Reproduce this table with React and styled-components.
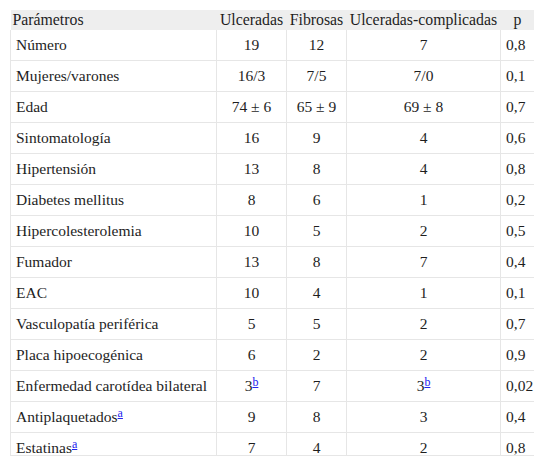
import React from 'react'
import styled, { createGlobalStyle } from 'styled-components'

const GlobalStyle = createGlobalStyle`
    body {
        margin: 0;
        background: #fff;
        font-family: "Liberation Serif", "Times New Roman", serif;
        color: #222;
    }
`

const rows = [
    ['Número', '19', '12', '7', '0,8'],
    ['Mujeres/varones', '16/3', '7/5', '7/0', '0,1'],
    ['Edad', '74 ± 6', '65 ± 9', '69 ± 8', '0,7'],
    ['Sintomatología', '16', '9', '4', '0,6'],
    ['Hipertensión', '13', '8', '4', '0,8'],
    ['Diabetes mellitus', '8', '6', '1', '0,2'],
    ['Hipercolesterolemia', '10', '5', '2', '0,5'],
    ['Fumador', '13', '8', '7', '0,4'],
    ['EAC', '10', '4', '1', '0,1'],
    ['Vasculopatía periférica', '5', '5', '2', '0,7'],
    ['Placa hipoecogénica', '6', '2', '2', '0,9'],
    ['Enfermedad carotídea bilateral', ['3', 'b'], '7', ['3', 'b'], '0,02'],
    [['Antiplaquetados', 'a'], '9', '8', '3', '0,4'],
    [['Estatinas', 'a'], '7', '4', '2', '0,8'],
]

const headers = ['Parámetros', 'Ulceradas', 'Fibrosas', 'Ulceradas-complicadas', 'p']

function Cell({ value }) {
    if (Array.isArray(value)) {
        return (
            <>
                {value[0]}
                <Note href="#">{value[1]}</Note>
            </>
        )
    }
    return value
}

function App() {
    return (
        <Page>
            <GlobalStyle />
            <Frame>
                <Table>
                    <colgroup>
                        <Col $w={206} />
                        <Col $w={70} />
                        <Col $w={60} />
                        <Col $w={154} />
                        <Col $w={34} />
                    </colgroup>
                    <thead>
                        <tr>
                            {headers.map((h, i) => (
                                <Th key={h} $align={i === 0 ? 'left' : 'center'}>{h}</Th>
                            ))}
                        </tr>
                    </thead>
                    <tbody>
                        {rows.map((r, i) => (
                            <tr key={i}>
                                {r.map((v, j) => (
                                    <Td key={j} $align={j === 0 || j === 4 ? 'left' : 'center'}>
                                        <Cell value={v} />
                                    </Td>
                                ))}
                            </tr>
                        ))}
                    </tbody>
                </Table>
            </Frame>
        </Page>
    )
}

export default App

const Page = styled.div`
    padding: 10px 10px 0 10px;
`

const Frame = styled.div`
    width: 524px;
    height: 445px;
    overflow: hidden;
    border-bottom: 1px solid #e6e6e6;
`

const Table = styled.table`
    width: 524px;
    table-layout: fixed;
    border-collapse: collapse;
    font-family: "Liberation Serif", "Times New Roman", serif;
    font-size: 15.5px;
    color: #1e1e1e;
`

const Col = styled.col`
    width: ${(p) => p.$w}px;
`

const Th = styled.th`
    background: #eeeeee;
    font-family: "Liberation Serif", "Times New Roman", serif;
    font-size: 15.8px;
    font-weight: normal;
    text-align: ${(p) => p.$align};
    padding: 1px 2px 2px 2px;
    line-height: 17px;
    white-space: nowrap;
    overflow: visible;
`

const Td = styled.td`
    border: 1px solid #e6e6e6;
    border-top: none;
    font-family: "Liberation Serif", "Times New Roman", serif;
    text-align: ${(p) => p.$align};
    padding: 6px 5px 6px 5px;
    line-height: 18px;
    white-space: nowrap;
    overflow: visible;
`

const Note = styled.a`
    color: #2222ee;
    text-decoration: underline;
    font-size: 12px;
    vertical-align: 5px;
    line-height: 0;
`
